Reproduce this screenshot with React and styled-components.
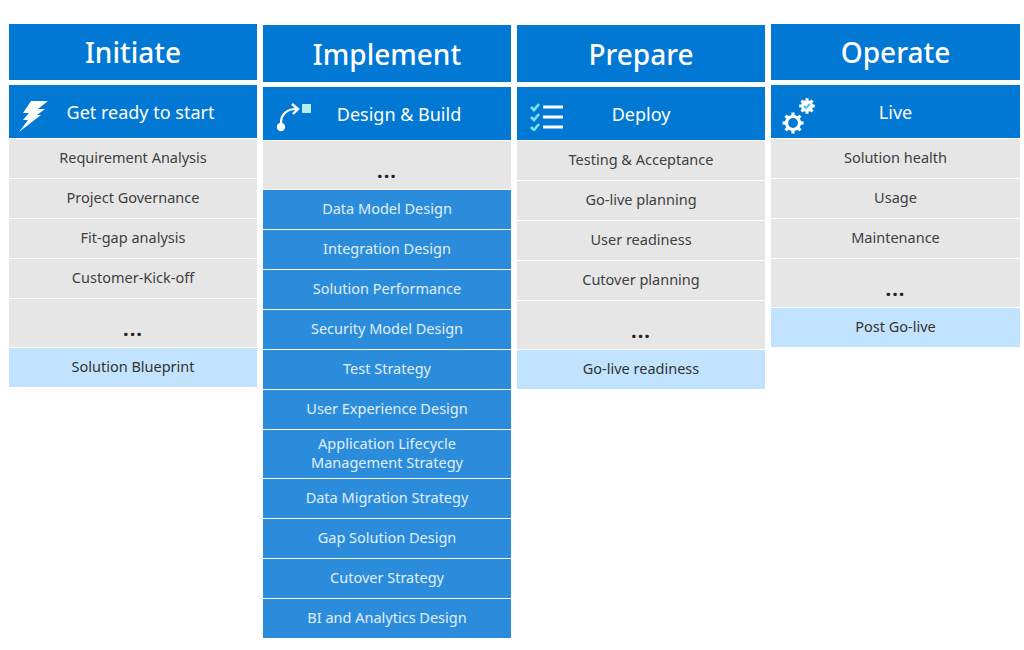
import React from 'react';
import styled, { createGlobalStyle } from 'styled-components';

const GlobalStyle = createGlobalStyle`
  html, body {
    margin: 0;
    padding: 0;
    background: #fff;
    font-family: 'Noto Sans', 'Open Sans', sans-serif;
  }
`;

const Board = styled.div`
  display: grid;
  grid-template-columns: 248px 248px 248px 249px;
  column-gap: 6px;
  align-items: start;
  width: 1024px;
  height: 650px;
  box-sizing: border-box;
  padding: 24px 0 0 9px;
`;
const Column = styled.section`
  display: flex;
  flex-direction: column;
  padding-top: ${props => props.$offset || 0}px;
`;
const Phase = styled.h2`
  display: flex;
  align-items: center;
  justify-content: center;
  height: ${props => props.$height || 56}px;
  margin: 0 0 5px;
  background: #0078d4;
  color: #fff;
  font-size: 28px;
  font-weight: 500;
`;
const Stage = styled.div`
  position: relative;
  display: flex;
  align-items: center;
  justify-content: center;
  height: 53px;
  margin-bottom: 1px;
  background: #0078d4;
  color: #fff;
  font-size: 18px;
  padding-left: ${props => props.$indent || 0}px;
  box-sizing: border-box;
`;
const StageIcon = styled.svg`
  position: absolute;
  left: ${props => props.$left}px;
  top: ${props => props.$top}px;
`;
const Row = styled.div`
  display: flex;
  align-items: center;
  justify-content: center;
  height: ${props => props.$height || 39}px;
  margin-bottom: 1px;
  box-sizing: border-box;
  padding-bottom: 2px;
  text-align: center;
  font-size: 14.5px;
  line-height: 19px;
  background: ${props => props.$bg || '#e6e6e6'};
  color: ${props => props.$color || '#404040'};
`;
const Dots = styled(Row)`
  height: 48px;
  padding: 10px 0 0;
  color: #222;
  font-size: 20px;
  font-weight: 700;
  letter-spacing: 1px;
`;

const Bolt = () => (
  <StageIcon $left={9} $top={15} width="32" height="32" viewBox="0 0 32 32">
    <path fill="#fff" d="M13 1 L30 1 L20 9 L27 9 L19 15 L23 15 L1 32 L10 20 L5 20 L11 13 L5 13 Z" />
  </StageIcon>
);

const Route = () => (
  <StageIcon $left={12} $top={13} width="40" height="34" viewBox="0 0 40 34">
    <path fill="none" stroke="#fff" strokeWidth="2.2" d="M6 23 C6 14 12 9 21 9" />
    <path fill="none" stroke="#fff" strokeWidth="2.4" d="M17 4 L23 9 L18 14" />
    <circle cx="6" cy="27" r="4.2" fill="#fff" />
    <rect x="27" y="4" width="9" height="9" fill="#b5f0ee" />
  </StageIcon>
);

const CheckList = () => (
  <StageIcon $left={13} $top={16} width="34" height="28" viewBox="0 0 34 28">
    <path fill="none" stroke="#7fe3ef" strokeWidth="2.6" d="M1 4 L4 7 L9 1 M1 14 L4 17 L9 11 M1 24 L4 27 L9 21" />
    <path stroke="#fff" strokeWidth="3" d="M13 4 H33 M13 14 H33 M13 24 H33" />
  </StageIcon>
);

const gearTeeth = [0, 45, 90, 135, 180, 225, 270, 315];

const Gears = () => (
  <StageIcon $left={10} $top={13} width="36" height="36" viewBox="0 0 36 36">
    <g transform="translate(12 25)">
      <circle r="6.5" fill="none" stroke="#fff" strokeWidth="3.2" />
      {gearTeeth.map(a => (
        <rect key={a} x="-1.6" y="-10.5" width="3.2" height="3.5" fill="#fff" transform={`rotate(${a})`} />
      ))}
    </g>
    <g transform="translate(26 8)">
      <circle r="6" fill="#fff" />
      {gearTeeth.map(a => (
        <rect key={a} x="-1.5" y="-7.8" width="3" height="3" fill="#fff" transform={`rotate(${a})`} />
      ))}
      <path fill="none" stroke="#3cc4ee" strokeWidth="1.8" d="M-3 0 L-1 2 L3 -2" />
    </g>
  </StageIcon>
);

const Outcome = ({ children }) => <Row $bg="#c2e3fd" $color="#333">{children}</Row>;
const Deliverable = ({ children, $height }) => (
  <Row $bg="#2b8cdc" $color="#e0effb" $height={$height}>{children}</Row>
);

export default function App() {
  return (
    <Board>
      <GlobalStyle />
      <Column>
        <Phase>Initiate</Phase>
        <Stage $indent={15}><Bolt />Get ready to start</Stage>
        <Row>Requirement Analysis</Row>
        <Row>Project Governance</Row>
        <Row>Fit-gap analysis</Row>
        <Row>Customer-Kick-off</Row>
        <Dots>...</Dots>
        <Outcome>Solution Blueprint</Outcome>
      </Column>
      <Column $offset={1}>
        <Phase $height={57}>Implement</Phase>
        <Stage $indent={24}><Route />Design &amp; Build</Stage>
        <Dots>...</Dots>
        <Deliverable>Data Model Design</Deliverable>
        <Deliverable>Integration Design</Deliverable>
        <Deliverable>Solution Performance</Deliverable>
        <Deliverable>Security Model Design</Deliverable>
        <Deliverable>Test Strategy</Deliverable>
        <Deliverable>User Experience Design</Deliverable>
        <Deliverable $height={48}>Application Lifecycle<br />Management Strategy</Deliverable>
        <Deliverable>Data Migration Strategy</Deliverable>
        <Deliverable>Gap Solution Design</Deliverable>
        <Deliverable>Cutover Strategy</Deliverable>
        <Deliverable>BI and Analytics Design</Deliverable>
      </Column>
      <Column $offset={1}>
        <Phase $height={57}>Prepare</Phase>
        <Stage><CheckList />Deploy</Stage>
        <Row>Testing &amp; Acceptance</Row>
        <Row>Go-live planning</Row>
        <Row>User readiness</Row>
        <Row>Cutover planning</Row>
        <Dots>...</Dots>
        <Outcome>Go-live readiness</Outcome>
      </Column>
      <Column>
        <Phase>Operate</Phase>
        <Stage><Gears />Live</Stage>
        <Row>Solution health</Row>
        <Row>Usage</Row>
        <Row>Maintenance</Row>
        <Dots>...</Dots>
        <Outcome>Post Go-live</Outcome>
      </Column>
    </Board>
  );
}
